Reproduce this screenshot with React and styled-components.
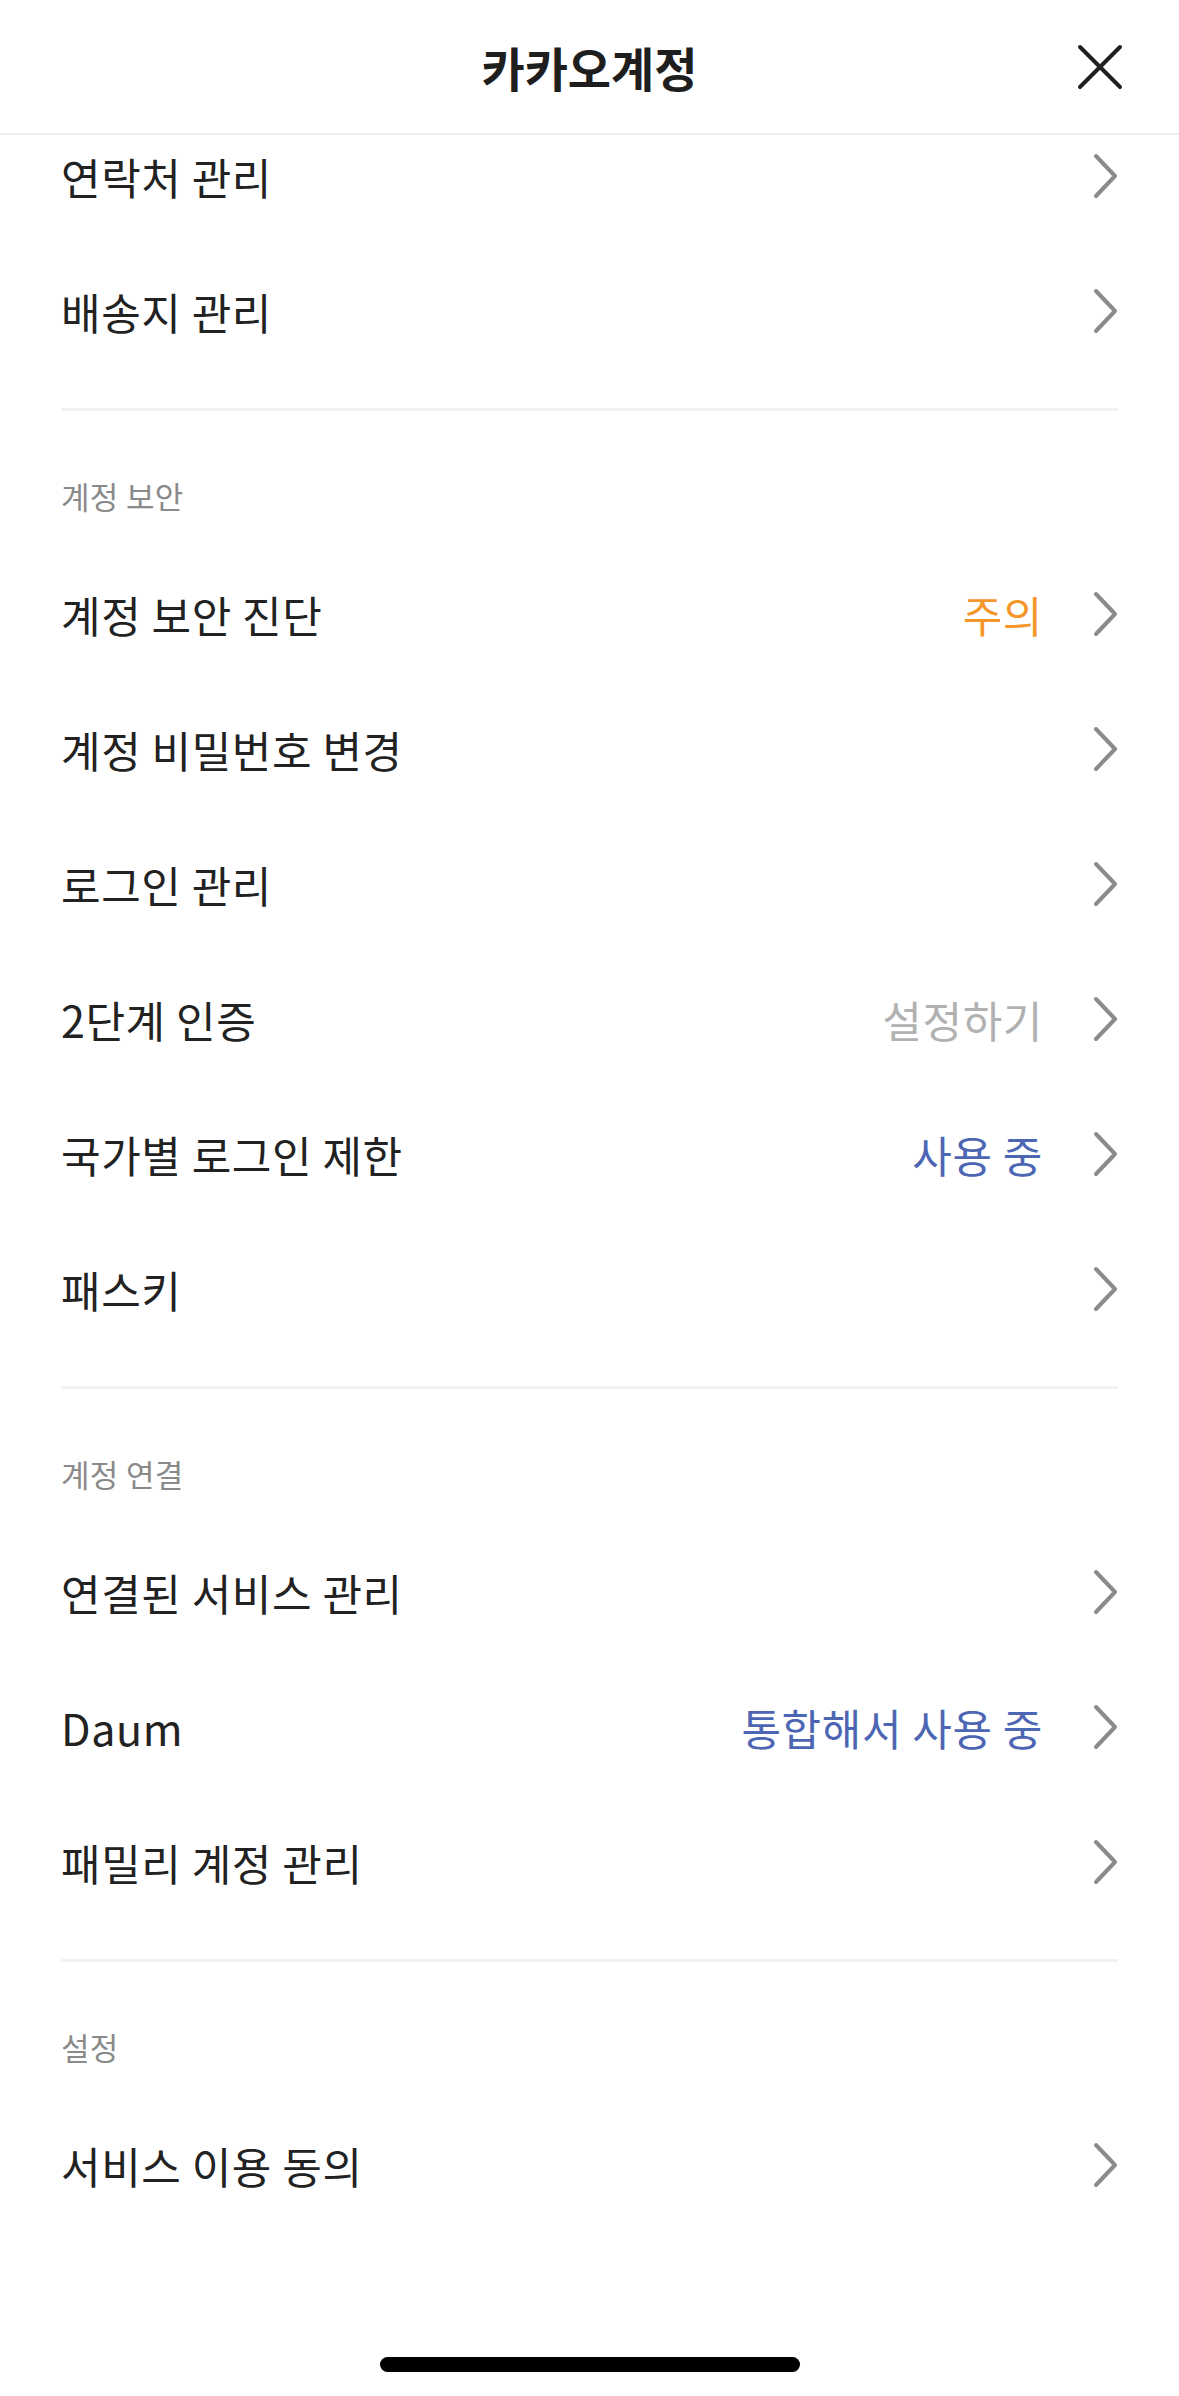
import React from "react";
import styled, { createGlobalStyle } from "styled-components";

const GlobalStyle = createGlobalStyle`
  html, body {
    margin: 0;
    padding: 0;
    background: #fff;
  }
  body {
    font-family: "Noto Sans CJK KR", "Noto Sans", sans-serif;
    color: #222;
  }
`;

const Page = styled.div`
  min-height: 100vh;
  display: flex;
  flex-direction: column;
  background: #fff;
`;

const Header = styled.header`
  position: sticky;
  top: 0;
  z-index: 1;
  height: 133px;
  display: flex;
  align-items: center;
  justify-content: center;
  background: #fff;
  border-bottom: 2px solid #efefef;
`;

const Title = styled.h1`
  margin: 0;
  font-size: 47px;
  font-weight: 600;
  color: #1e1e1e;
`;

const CloseButton = styled.button`
  position: absolute;
  right: 56px;
  top: 44px;
  width: 46px;
  height: 46px;
  padding: 0;
  border: 0;
  background: none;
  display: flex;
  align-items: center;
  justify-content: center;
`;

// the list is scrolled a little, so the first row slides under the header
const Content = styled.main`
  margin-top: ${(p) => p.$scroll}px;
`;

const Section = styled.section`
  padding-bottom: 30px;
`;

const SectionLabel = styled.div`
  padding: 67px 61px 32px;
  font-size: 31px;
  line-height: 36px;
  letter-spacing: 0.3px;
  color: #8a8a8a;
`;

const Row = styled.div`
  height: 135px;
  display: flex;
  align-items: center;
  padding: 0 61px;
`;

const RowLabel = styled.span`
  flex: 1;
  font-size: 43px;
  letter-spacing: 0.6px;
  color: #222;
`;

const Status = styled.span`
  margin-right: 50px;
  font-size: 43px;
  letter-spacing: 0.6px;
  color: ${(p) =>
    p.$tone === "warn" ? "#f5962a" : p.$tone === "on" ? "#4d66b4" : "#b1b1b1"};
`;

const Divider = styled.hr`
  margin: 0 61px;
  height: 3px;
  border: 0;
  background: #f1f1f1;
`;

const HomeBar = styled.div`
  margin: auto auto 24px;
  width: 420px;
  height: 15px;
  border-radius: 8px;
  background: #000;
`;

function Chevron() {
  return (
    <svg width="25" height="46" viewBox="0 0 25 46" fill="none">
      <polyline
        points="3,3 22,23 3,43"
        stroke="#8b8b8b"
        strokeWidth="4"
        strokeLinecap="round"
        strokeLinejoin="round"
      />
    </svg>
  );
}

function CloseIcon() {
  return (
    <svg width="46" height="46" viewBox="0 0 46 46" fill="none">
      <path
        d="M3 3 L43 43 M43 3 L3 43"
        stroke="#222"
        strokeWidth="4"
        strokeLinecap="round"
      />
    </svg>
  );
}

const sections = [
  {
    label: null,
    rows: [{ name: "연락처 관리" }, { name: "배송지 관리" }],
  },
  {
    label: "계정 보안",
    rows: [
      { name: "계정 보안 진단", status: "주의", tone: "warn" },
      { name: "계정 비밀번호 변경" },
      { name: "로그인 관리" },
      { name: "2단계 인증", status: "설정하기", tone: "off" },
      { name: "국가별 로그인 제한", status: "사용 중", tone: "on" },
      { name: "패스키" },
    ],
  },
  {
    label: "계정 연결",
    rows: [
      { name: "연결된 서비스 관리" },
      { name: "Daum", status: "통합해서 사용 중", tone: "on" },
      { name: "패밀리 계정 관리" },
    ],
  },
  {
    label: "설정",
    rows: [{ name: "서비스 이용 동의" }],
    last: true,
  },
];

function App() {
  return (
    <Page>
      <GlobalStyle />
      <Header>
        <Title>카카오계정</Title>
        <CloseButton aria-label="닫기">
          <CloseIcon />
        </CloseButton>
      </Header>
      <Content $scroll={-27}>
        {sections.map((s, i) => (
          <React.Fragment key={i}>
            <Section>
              {s.label && <SectionLabel>{s.label}</SectionLabel>}
              {s.rows.map((r) => (
                <Row key={r.name}>
                  <RowLabel>{r.name}</RowLabel>
                  {r.status && <Status $tone={r.tone}>{r.status}</Status>}
                  <Chevron />
                </Row>
              ))}
            </Section>
            {!s.last && <Divider />}
          </React.Fragment>
        ))}
      </Content>
      <HomeBar />
    </Page>
  );
}

export default App;
